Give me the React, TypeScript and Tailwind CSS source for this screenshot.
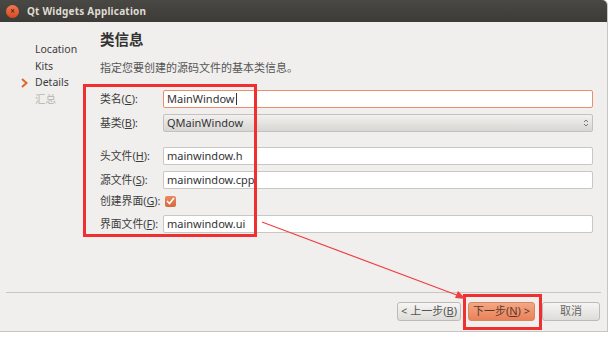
import React from 'react';

const fields = [
  { label: '头文件', key: 'H', value: 'mainwindow.h' },
  { label: '源文件', key: 'S', value: 'mainwindow.cpp' },
];

const Label: React.FC<{ text: string; k: string }> = ({ text, k }) => (
  <div className="w-[63px] shrink-0 whitespace-nowrap text-[10.8px] text-[#3c3c3c]">
    {text}(<span className="underline">{k}</span>):
  </div>
);

const TextField: React.FC<{ value: string; focused?: boolean; cursor?: boolean }> = ({ value, focused, cursor }) => (
  <div
    className={`flex-1 h-[18px] bg-white rounded-[2px] border flex items-center px-[3px] text-[11px] text-[#333] ${
      focused ? 'border-[#e8906e]' : 'border-[#c9c7c3]'
    }`}
  >
    {value}
    {cursor && <span className="w-px h-[12px] bg-[#333] ml-px" />}
  </div>
);

export default function App() {
  return (
    <div className="relative w-[615px] h-[341px] bg-white overflow-hidden" style={{ fontFamily: '"Noto Sans", "Noto Sans CJK SC", sans-serif' }}>
      <div className="w-[608px] h-[332px] bg-[#f0efed] rounded-tr-[5px] border-r border-b border-[#c8c6c2] flex flex-col">
        {/* title bar */}
        <div className="h-[22px] shrink-0 bg-gradient-to-b from-[#4a4844] to-[#3c3b37] rounded-tr-[5px] flex items-center px-[6px] gap-[8px]">
          <div className="w-[13px] h-[13px] rounded-full bg-gradient-to-b from-[#f27a50] to-[#d9471e] flex items-center justify-center text-[8px] leading-none text-[#5a2a18] font-bold">
            ×
          </div>
          <div className="text-[10px] font-bold text-[#dfdbd2] tracking-[0.2px]">Qt Widgets Application</div>
        </div>

        <div className="flex flex-1">
          {/* sidebar */}
          <div className="w-[100px] shrink-0 pt-[20px] text-[10.5px] text-[#3c3c3c]">
            {['Location', 'Kits', 'Details', '汇总'].map((item, i) => (
              <div key={item} className="relative h-[16.5px] flex items-center pl-[35px]">
                {i === 2 && (
                  <svg className="absolute left-[21px] top-[3px]" width="7" height="10" viewBox="0 0 7 10">
                    <path d="M1 1 L5.5 5 L1 9" fill="none" stroke="#e0662e" strokeWidth="2" />
                  </svg>
                )}
                <span className={i === 3 ? 'text-[#b5b3ae]' : ''}>{item}</span>
              </div>
            ))}
          </div>

          {/* main */}
          <div className="flex-1 flex flex-col pr-[14px]">
            <div className="pt-[7px] text-[14.5px] font-bold text-[#333]">类信息</div>
            <div className="mt-[9px] text-[11px] text-[#555]">指定您要创建的源码文件的基本类信息。</div>

            <div className="mt-[14px] flex flex-col">
              <div className="flex items-center h-[18px]">
                <Label text="类名" k="C" />
                <TextField value="MainWindow" focused cursor />
              </div>
              <div className="flex items-center h-[18px] mt-[6px]">
                <Label text="基类" k="B" />
                <div className="flex-1 h-[18px] rounded-[2px] border border-[#c4c2be] bg-gradient-to-b from-[#f2f1ef] to-[#d8d6d2] flex items-center justify-between px-[3px] text-[11px] text-[#333]">
                  QMainWindow
                  <svg width="6" height="10" viewBox="0 0 6 10">
                    <path d="M1 4 L3 2 L5 4 M1 6 L3 8 L5 6" fill="none" stroke="#777" strokeWidth="1" />
                  </svg>
                </div>
              </div>

              <div className="flex flex-col gap-[6px] mt-[15px]">
                {fields.map((f) => (
                  <div key={f.key} className="flex items-center h-[18px]">
                    <Label text={f.label} k={f.key} />
                    <TextField value={f.value} />
                  </div>
                ))}
              </div>

              <div className="flex items-center h-[20px] mt-[2px]">
                <Label text="创建界面" k="G" />
                <div className="ml-[2px] w-[11px] h-[11px] rounded-[2px] bg-gradient-to-b from-[#e98a62] to-[#d46a3d] flex items-center justify-center">
                  <svg width="9" height="8" viewBox="0 0 9 8">
                    <path d="M1 4 L3.5 6.5 L8 1" fill="none" stroke="#fff" strokeWidth="1.6" />
                  </svg>
                </div>
              </div>

              <div className="flex items-center h-[18px] mt-[4px]">
                <Label text="界面文件" k="F" />
                <TextField value="mainwindow.ui" />
              </div>
            </div>
          </div>
        </div>

        {/* bottom */}
        <div className="mx-[6px] border-t border-[#c8c6c2]" />
        <div className="h-[38px] shrink-0 flex items-center justify-end gap-[7px] pr-[7px] pb-[1px] text-[11px]">
          <div className="w-[64px] h-[19px] rounded-[3px] border border-[#bdbbb7] bg-gradient-to-b from-[#f6f5f3] to-[#dedcd8] flex items-center justify-center text-[#555]">
            &lt; 上一步(<span className="underline">B</span>)
          </div>
          <div className="w-[67px] h-[19px] rounded-[3px] border border-[#d7875f] bg-gradient-to-b from-[#f5a683] to-[#e8825a] flex items-center justify-center text-[#5a3a2c]">
            下一步(<span className="underline">N</span>) &gt;
          </div>
          <div className="w-[58px] h-[19px] rounded-[3px] border border-[#bdbbb7] bg-gradient-to-b from-[#f6f5f3] to-[#dedcd8] flex items-center justify-center text-[#666]">
            取消
          </div>
        </div>
      </div>

      {/* annotations */}
      <div className="absolute left-[83px] top-[84px] w-[174px] h-[153px] border-[3px] border-[#f03030]" />
      <div className="absolute left-[463px] top-[294px] w-[79px] h-[36px] border-[3px] border-[#f03030]" />
      <svg className="absolute left-0 top-0 pointer-events-none" width="615" height="341">
        <line x1="262" y1="222" x2="462" y2="297" stroke="#f04040" strokeWidth="1.2" />
        <path d="M466 299 L455 298 L458 291 Z" fill="#f04040" />
      </svg>
    </div>
  );
}
